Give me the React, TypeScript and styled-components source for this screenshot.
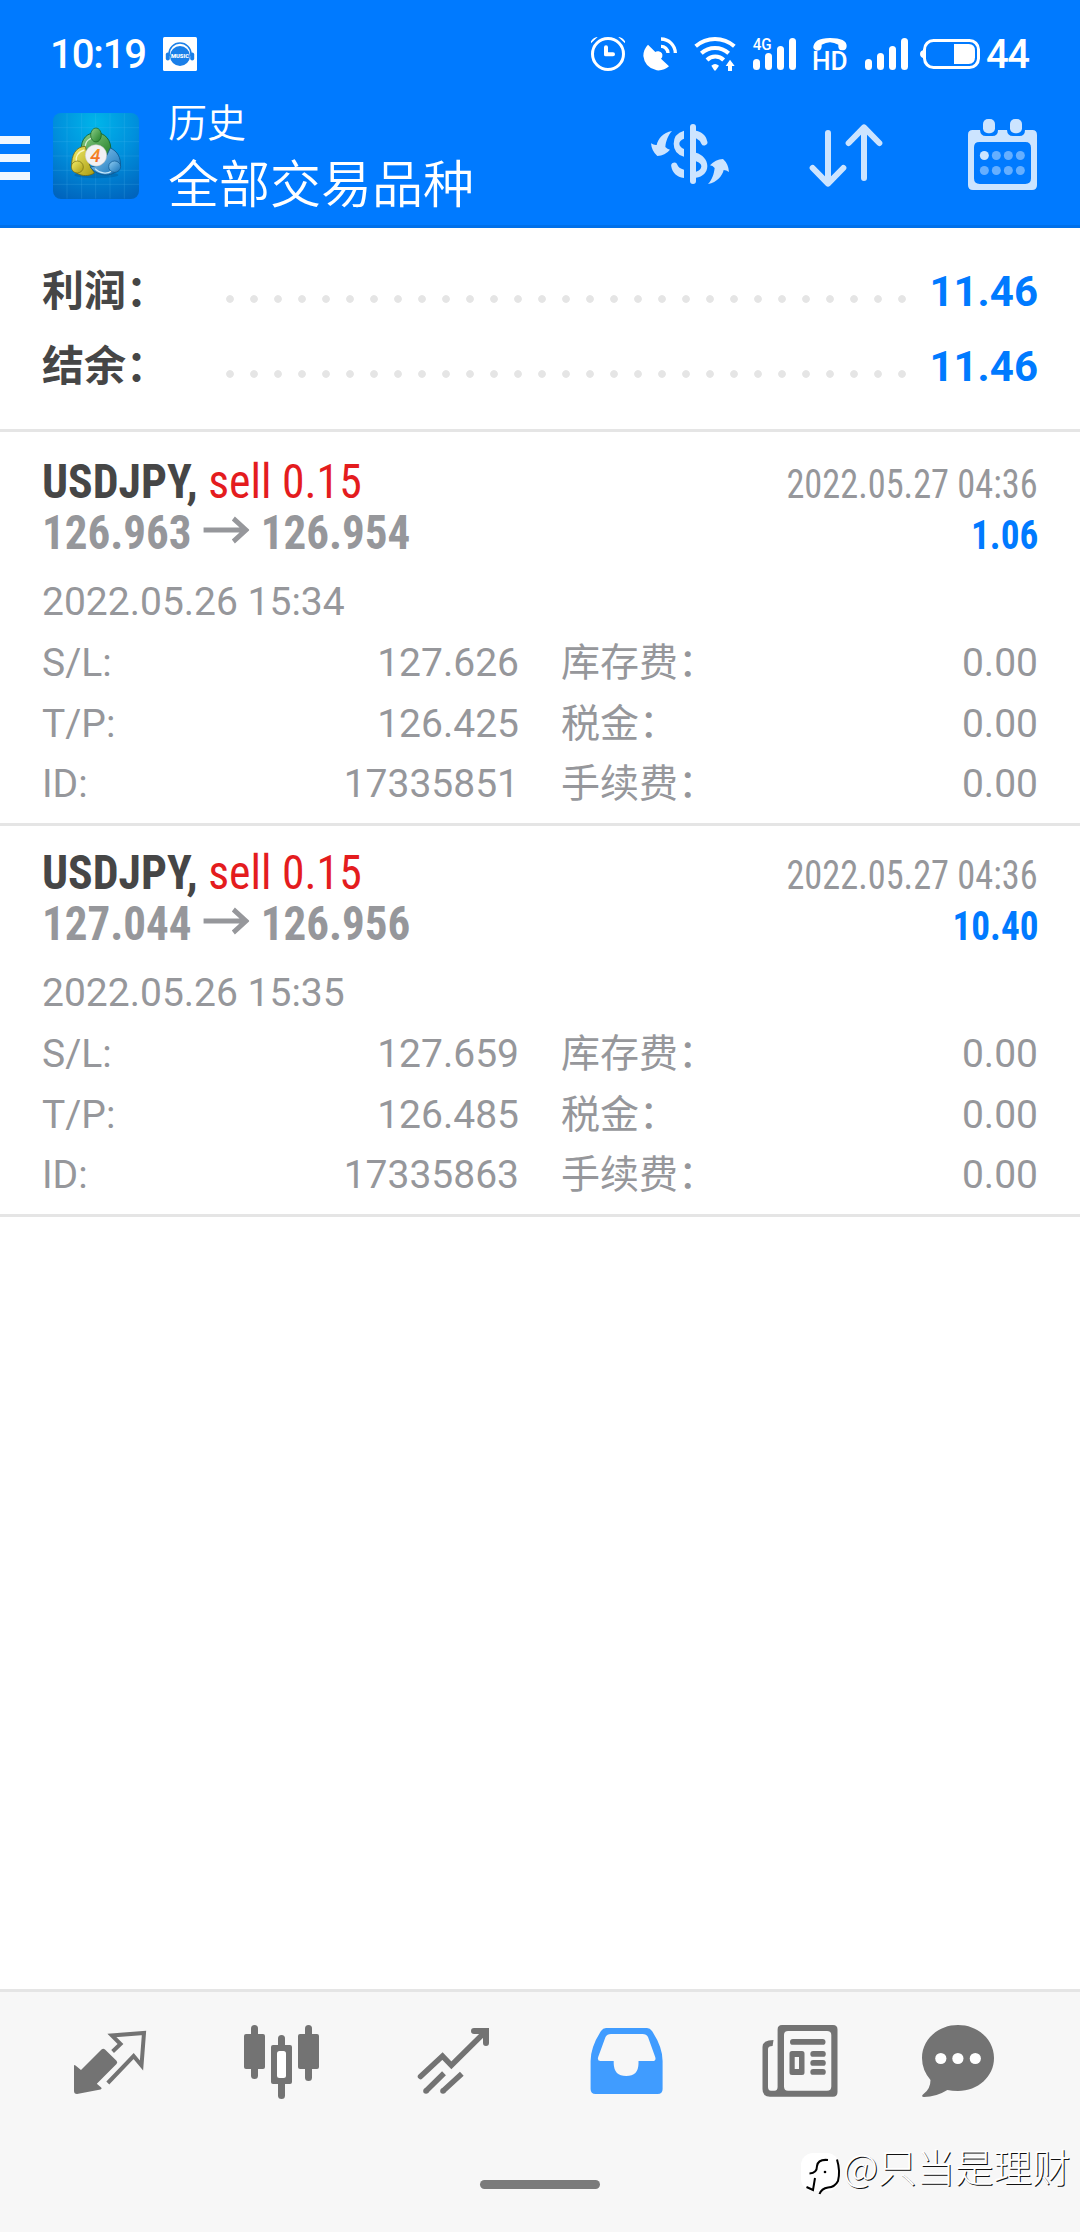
import React from "react";
import styled, { createGlobalStyle } from "styled-components";

const GlobalStyle = createGlobalStyle`
  * { box-sizing: border-box; }
  body {
    margin: 0;
    background: #fff;
    font-family: Roboto, "Noto Sans CJK SC", sans-serif;
    -webkit-font-smoothing: antialiased;
  }
  svg { display: block; flex: none; }
`;

const Screen = styled.div`
  position: relative;
  width: 1080px;
  height: 2232px;
  display: flex;
  flex-direction: column;
  background: #fff;
  overflow: hidden;
`;

/* ---------- Header ---------- */

const Header = styled.header`
  height: 228px;
  background: #007aff;
  border-bottom: 3px solid #0070e9;
  color: #fff;
`;

const StatusBar = styled.div`
  height: 104px;
  padding: 4px 50px 0 50px;
  display: flex;
  align-items: center;
  justify-content: space-between;
`;

const StatusGroup = styled.div`
  display: flex;
  align-items: center;
`;

const Clock = styled.span`
  width: 113px;
  padding-top: 2px;
  font-size: 40px;
  line-height: 40px;
  font-weight: 500;
  letter-spacing: -1.1px;
`;

const BatteryLevel = styled.span`
  width: 44px;
  margin-left: 6px;
  padding-top: 2px;
  font-size: 40px;
  line-height: 40px;
  font-weight: 500;
  letter-spacing: -1.6px;
`;

const AppBar = styled.div`
  height: 121px;
  display: flex;
  align-items: flex-start;
`;

const MenuButton = styled.div`
  width: 30px;
  margin-top: 32px;
  display: flex;
  flex-direction: column;
  gap: 10px;
`;

const MenuLine = styled.span`
  height: 8px;
  background: #f0f7ff;
`;

const LogoSlot = styled.div`
  margin: 9px 0 0 23px;
`;

const Titles = styled.div`
  flex: 1;
  margin-left: 29px;
  display: flex;
  flex-direction: column;
  gap: 15px;
  font-weight: 350;
`;

const Title = styled.span`
  font-size: 39px;
  line-height: 40px;
`;

const Subtitle = styled.span`
  font-size: 51px;
  line-height: 54px;
`;

const Actions = styled.div`
  display: flex;
  gap: 79px;
  padding: 14px 43px 0 0;
`;

/* ---------- Summary ---------- */

const Summary = styled.section`
  height: 204px;
  padding: 26px 42px 0;
  border-bottom: 3px solid #e5e5e5;
`;

const SummaryRow = styled.div`
  height: 75px;
  display: flex;
  align-items: center;
  font-size: 42px;
  line-height: 75px;
  font-weight: 700;
`;

const SummaryLabel = styled.span`
  width: 176px;
  color: #464646;
`;

const Leader = styled.span`
  width: 696px;
  height: 10px;
  margin-top: 15px;
  background: radial-gradient(circle, #e5e5e5 3.4px, transparent 4.3px) 0 0 / 24px 10px repeat-x;
`;

const SummaryValue = styled.span`
  flex: 1;
  text-align: right;
  color: #007aff;
`;

/* ---------- Trades ---------- */

const TradeList = styled.main`
  flex: 1;
  padding-top: 3px;
`;

const Trade = styled.article`
  height: 391px;
  padding: 21px 42px 0;
  border-bottom: 3px solid #e5e5e5;
  color: #96979b;
`;

const TradeLine = styled.div`
  height: 51px;
  display: flex;
  align-items: baseline;
  justify-content: space-between;
  font-family: "Roboto Condensed", Roboto, sans-serif;
  font-size: 48px;
  line-height: 51px;
  white-space: nowrap;
`;

const Deal = styled.span`
  transform: scaleX(0.952);
  transform-origin: left;
`;

const Symbol = styled.span`
  color: #464646;
  font-weight: 700;
`;

const Side = styled.span`
  color: #e41c1e;
`;

const Prices = styled.span`
  display: flex;
  gap: 12.3px;
  font-weight: 700;
  transform: scaleX(0.938);
  transform-origin: left;
`;

const ArrowSlot = styled.span`
  height: 51px;
  padding-top: 7px;
`;

const Small = styled.span<{ $profit?: boolean }>`
  font-size: 40px;
  font-weight: ${(p) => (p.$profit ? 700 : 400)};
  color: ${(p) => (p.$profit ? "#007aff" : "inherit")};
  transform: scaleX(${(p) => (p.$profit ? 0.93 : 0.908)});
  transform-origin: right;
`;

const Details = styled.div`
  margin-top: 14px;
  font-size: 39px;
  line-height: 61px;
`;

const DetailGrid = styled.div`
  display: grid;
  grid-template-columns: 477px 477px;
  grid-template-rows: 61px 60px 60px;
  column-gap: 42px;
`;

const Detail = styled.div`
  display: flex;
  justify-content: space-between;
`;

/* ---------- Bottom navigation ---------- */

const BottomBar = styled.nav`
  height: 243px;
  background: #f7f7f7;
  border-top: 3px solid #e5e5e5;
  display: flex;
  flex-direction: column;
  align-items: center;
`;

const Tabs = styled.div`
  align-self: stretch;
  display: flex;
  gap: 82px;
  padding: 28px 0 0 60px;
`;

const Tab = styled.div<{ $active?: boolean }>`
  color: ${(p) => (p.$active ? "#409cff" : "#737373")};
`;

const HomeBar = styled.div`
  width: 120px;
  height: 9px;
  margin-top: 70px;
  border-radius: 5px;
  background: #7b7b7b;
`;

const Watermark = styled.div`
  position: absolute;
  left: 801px;
  top: 2149px;
  display: flex;
  align-items: flex-start;
  height: 50px;
  font-size: 38.5px;
  line-height: 32px;
  font-weight: 300;
  font-family: "Noto Sans CJK SC", sans-serif;
  color: #fff;
  white-space: nowrap;
  text-shadow: 1px 1px 0.5px #111;
`;

/* ---------- Status icons ---------- */

const MusicIcon = () => (
  <svg width="34" height="34" viewBox="0 0 34 34">
    <rect width="34" height="34" rx="1.5" fill="#fff" />
    <circle cx="17" cy="19" r="10" fill="#1a7fe8" />
    <path d="M6 19V17a11 11 0 0 1 22 0v2" fill="none" stroke="#1a7fe8" strokeWidth="1.5" />
    <rect x="2.8" y="15.5" width="4" height="8" rx="2" fill="#1a7fe8" />
    <rect x="27.2" y="15.5" width="4" height="8" rx="2" fill="#1a7fe8" />
    <text x="17" y="21.2" textAnchor="middle" fontSize="5.8" fontWeight="900" fill="#fff" textLength="18">MUSIC</text>
  </svg>
);

const StatusIcons = () => (
  <svg width="389" height="48" viewBox="93 90 1167 144" fill="#fff">
    {/* alarm */}
    <circle cx="144" cy="162" r="46.5" fill="none" stroke="#fff" strokeWidth="9" />
    <path d="M132 142q0-6 6-6t6 6v15h15q6 0 6 6t-6 6h-22q-5 0-5-5z" />
    <path d="M93 130v-6q8-12 18-13h2zM195 130v-6q-8-12-18-13h-2z" />
    {/* satellite dish */}
    <path d="M264 134L286 156Q289 153 296 154Q309 157 307 169Q307 173 303 176L327 199Q312 213 290 211Q254 203 250 168Q250 148 264 134Z" />
    <path d="M303 117A43 43 0 0 1 346 159M303 139A21 21 0 0 1 324 159" fill="none" stroke="#fff" strokeWidth="10" />
    {/* wifi */}
    <g fill="none" stroke="#fff" strokeWidth="12">
      <path d="M407 139A88 88 0 0 1 523 139" />
      <path d="M424 160A61 61 0 0 1 506 160" />
      <path d="M441 180A35 35 0 0 1 491 180" />
    </g>
    <path d="M454 197Q465 187 477 197L468 210Q465 214 462 210Z" />
    <path d="M510 179L524 198H516V213H504V198H497Z" />
    {/* 4G signal */}
    <text x="578" y="150" fontSize="49" fontWeight="500" textLength="57" lengthAdjust="spacingAndGlyphs">4G</text>
    <rect x="579" y="177" width="21" height="33" rx="10.5" />
    <rect x="615" y="159" width="21" height="51" rx="10.5" />
    <rect x="651" y="138" width="21" height="72" rx="10.5" />
    <rect x="687" y="114" width="21" height="96" rx="10.5" />
    {/* HD voice */}
    <path d="M760 144Q760 114 810 114Q860 114 860 138Q859 151 849 151L841 150Q834 147 835 134Q810 119 785 134Q786 147 779 151Q765 155 760 144Z" />
    <text x="756" y="210" fontSize="76" fontWeight="500" textLength="107" lengthAdjust="spacingAndGlyphs">HD</text>
    {/* second signal */}
    <rect x="915" y="177" width="21" height="33" rx="10.5" />
    <rect x="951" y="159" width="21" height="51" rx="10.5" />
    <rect x="987" y="138" width="21" height="72" rx="10.5" />
    <rect x="1023" y="114" width="21" height="96" rx="10.5" />
    {/* battery */}
    <rect x="1093.5" y="121.5" width="162" height="81" rx="27" fill="none" stroke="#fff" strokeWidth="9" />
    <path d="M1092 149Q1080 152 1080 162T1092 175Z" />
    <path d="M1182 132H1226Q1245 132 1245 152V172Q1245 192 1226 192H1182Z" />
  </svg>
);

/* ---------- App bar icons ---------- */

const AppLogo = () => (
  <svg width="86" height="86" viewBox="40 261 258 258">
    <defs>
      <radialGradient id="bg" cx="0.5" cy="0.12" r="0.95">
        <stop offset="0" stopColor="#00b5ea" />
        <stop offset="0.5" stopColor="#008fdc" />
        <stop offset="1" stopColor="#0064bd" />
      </radialGradient>
      <linearGradient id="green" x1="0" y1="0" x2="1" y2="1">
        <stop offset="0" stopColor="#8ed08a" />
        <stop offset="1" stopColor="#1e7d25" />
      </linearGradient>
      <linearGradient id="yellow" x1="0" y1="0" x2="1" y2="1">
        <stop offset="0" stopColor="#f3ee6a" />
        <stop offset="1" stopColor="#a99b12" />
      </linearGradient>
      <linearGradient id="blue" x1="0" y1="0" x2="1" y2="1">
        <stop offset="0" stopColor="#8fcdf2" />
        <stop offset="1" stopColor="#1471b8" />
      </linearGradient>
      <linearGradient id="four" x1="0" y1="0" x2="0" y2="1">
        <stop offset="0" stopColor="#f9a11e" />
        <stop offset="1" stopColor="#ee5a2c" />
      </linearGradient>
    </defs>
    <rect x="40" y="261" width="258" height="258" rx="24" fill="url(#bg)" />
    <path
      d="M82 262V518M126 262V518M168 262V518M211 262V518M254 262V518M40 305H298M40 347H298M40 390H298M40 433H298M40 475H298"
      stroke="#5cc4f5"
      strokeOpacity="0.22"
      strokeWidth="2.5"
    />
    <ellipse cx="170" cy="447" rx="66" ry="10" fill="#003a70" opacity="0.25" />
    <path d="M125 376C122 336 145 320 169 320S218 340 213 380L196 396L142 374Z" fill="url(#green)" stroke="#145f1e" strokeWidth="2.5" />
    <path d="M137 368C135 345 150 334 169 334" fill="none" stroke="#d5f0d0" strokeWidth="4" />
    <path d="M137 361C108 362 95 388 96 420C100 445 138 458 164 441L150 418Z" fill="url(#yellow)" stroke="#6f6a12" strokeWidth="2.5" />
    <path d="M134 372C114 378 106 394 110 408" fill="none" stroke="#fbf8bd" strokeWidth="4" />
    <path d="M212 366C234 376 244 395 242 420C225 455 178 455 152 424L190 412Z" fill="url(#blue)" stroke="#0c548c" strokeWidth="2.5" />
    <path d="M166 428C180 443 202 445 216 435" fill="none" stroke="#c6e8fb" strokeWidth="4" />
    <ellipse cx="169" cy="327" rx="16" ry="21" fill="url(#green)" stroke="#145f1e" strokeWidth="2" />
    <ellipse cx="113" cy="423" rx="18" ry="18" fill="url(#yellow)" stroke="#6f6a12" strokeWidth="2" />
    <ellipse cx="225" cy="422" rx="18" ry="17" fill="url(#blue)" stroke="#0c548c" strokeWidth="2" />
    <circle cx="169" cy="388" r="32" fill="#f1f1f3" stroke="#c5c8cc" strokeWidth="1.5" />
    <text x="167" y="407" textAnchor="middle" fontSize="56" fontStyle="italic" fontWeight="500" fill="url(#four)">4</text>
  </svg>
);

const DealIcon = () => (
  <svg width="78" height="72" viewBox="273 354 234 216" fill="#cce4ff">
    <path d="M336 393C325 404 317 424 316 441Q322 448 330 449Q315 467 292 468Q275 454 273 430Q282 436 290 435C294 417 309 397 336 393Z" />
    <path d="M444 552C456 540 462 522 464 504Q458 497 450 496Q466 478 489 477Q505 491 507 516Q499 510 491 510C487 527 472 547 444 552Z" />
    <path d="M372 392V416Q358 422 358 431T372 447V470Q341 461 341 431T372 392Z" />
    <path d="M372 534C350 531 337 517 334 500A9.5 9.5 0 0 1 352 494Q355 504 372 509Z" />
    <rect x="390" y="372" width="18" height="180" rx="9" />
    <path d="M408 392C425 395 438 406 441 422A9.5 9.5 0 0 1 424 431Q420 421 408 415Z" />
    <path fillRule="evenodd" d="M408 458C427 463 442 479 442 498S428 531 408 533ZM408 484V515Q424 511 424 499Q424 490 408 484Z" />
  </svg>
);

const SortIcon = () => (
  <svg width="81" height="72" viewBox="744 354 243 216" fill="none" stroke="#cce4ff" strokeWidth="18" strokeLinecap="round" strokeLinejoin="round">
    <path d="M804 399V548M758 504L804 551L850 504" />
    <path d="M912 534V384M866 429L912 382L958 429" />
  </svg>
);

const CalendarIcon = () => (
  <svg width="69" height="72" viewBox="1224 354 207 216" fill="#cce4ff">
    <path
      fillRule="evenodd"
      d="M1238 390H1260Q1261 408 1278 408H1297Q1314 408 1314 390H1341Q1342 408 1359 408H1378Q1395 408 1395 390H1417Q1431 390 1431 405V555Q1431 570 1416 570H1239Q1224 570 1224 555V404Q1224 390 1238 390ZM1258 426Q1242 426 1242 442V535Q1242 552 1259 552H1396Q1413 552 1413 535V443Q1413 426 1396 426Z"
    />
    <rect x="1269" y="357" width="36" height="43" rx="15" />
    <rect x="1350" y="357" width="36" height="43" rx="15" />
    <circle cx="1273" cy="466.5" r="13.5" />
    <g fill="#66afff">
      {[1309, 1345, 1381].map((x) => (
        <circle key={x} cx={x} cy="466.5" r="13.5" />
      ))}
      {[1273, 1309, 1345, 1381].map((x) => (
        <circle key={x} cx={x} cy="511.5" r="13.5" />
      ))}
    </g>
  </svg>
);

/* ---------- Trade arrow ---------- */

const PriceArrow = () => (
  <svg width="49" height="34" viewBox="0 0 49 34" fill="none" stroke="#96979b" strokeWidth="5">
    <path d="M0 16H45M32 4.5L45.5 16L32 27.5" />
  </svg>
);

/* ---------- Tab icons ---------- */

const TabSvg = ({ children }: { children: React.ReactNode }) => (
  <svg width="90" height="90" viewBox="0 0 90 90" fill="currentColor">
    {children}
  </svg>
);

const QuotesIcon = () => (
  <TabSvg>
    <path d="M14 46Q14 44.5 15.5 45.5L21 50L41.5 29.5Q43.3 28 45 29.5L56.5 40.8Q58 42.5 56.5 44L36.8 63.7L41.2 67.5Q42.4 69 40.5 69.6L17 74Q14 74 14 71Z" />
    <path d="M52.6 31.5L60.5 24L51.9 15.5L84 13L81.5 45.5L73.6 36L47.8 63" fill="none" stroke="currentColor" strokeWidth="4" />
  </TabSvg>
);

const ChartIcon = () => (
  <TabSvg>
    <rect x="12" y="14" width="21" height="35" rx="2" />
    <rect x="19" y="5" width="7" height="54" rx="3.5" />
    <rect x="66" y="14" width="21" height="35" rx="2" />
    <rect x="73" y="5" width="7" height="56" rx="3.5" />
    <rect x="46" y="15" width="7" height="64" rx="3.5" />
    <rect x="39" y="25" width="21" height="39" rx="2" />
    <rect x="45" y="31" width="9" height="27" rx="2.5" fill="#fff" />
  </TabSvg>
);

const TradeIcon = () => (
  <TabSvg>
    <g fill="none" stroke="currentColor" strokeWidth="5.5">
      <path d="M16.5 56.5L38.5 36L47.4 45.3L81.5 11.5" strokeLinecap="round" />
      <path d="M70 11H82V23" strokeWidth="6" strokeLinecap="round" />
      <path d="M22 71L40 53.3M39 71L57.8 53.8" />
    </g>
    <circle cx="22" cy="71" r="2.8" />
    <circle cx="39" cy="71" r="2.8" />
  </TabSvg>
);

const HistoryIcon = () => (
  <TabSvg>
    <path
      fillRule="evenodd"
      d="M30 8H71Q74 8 76 11Q86.6 27 86.6 41V69Q86.6 74 81.6 74H19.6Q14.6 74 14.6 69V41Q14.6 27 25 11Q27 8 30 8ZM35 14Q31 14 29.5 17L22.2 37Q21 41 24.5 41H37.7V43.5Q38 56 50.2 56T62.5 43.5V41H76.5Q80.5 41 79.2 37L72 17Q70.5 14 66.5 14Z"
    />
  </TabSvg>
);

const NewsIcon = () => (
  <TabSvg>
    <path
      fillRule="evenodd"
      d="M34 5H85Q89.5 5 89.5 9.5V72Q89.5 76.7 85 76.7H22Q14.5 76.7 14.5 69V27Q14.5 20 25.5 20L24.6 26Q20 26 20 29V67Q20 70.7 23 70.7H26.5Q29.6 70.7 29.6 67V9.5Q29.6 5 34 5ZM40 11Q36 11 36 15V66.5Q36 70.7 40 70.7H79Q83.3 70.7 83.3 66.5V15Q83.3 11 79 11Z"
    />
    <rect x="42" y="19" width="35.5" height="5.8" rx="2.9" />
    <path fillRule="evenodd" d="M44 31H54Q56.5 31 56.5 33.5V52.5Q56.5 55 54 55H44Q41.5 55 41.5 52.5V33.5Q41.5 31 44 31ZM46.7 37V49H51V37Z" />
    <rect x="62.3" y="31" width="15.5" height="5.8" rx="2.9" />
    <rect x="62.3" y="40" width="15.5" height="5.8" rx="2.9" />
    <rect x="62.3" y="49" width="15.5" height="5.8" rx="2.9" />
  </TabSvg>
);

const ChatIcon = () => (
  <TabSvg>
    <path d="M38 5C58 5 74 19.5 74 38S58 71 38 71Q32 71 27.4 70Q16 77 4 77Q0.5 76.5 3.5 74Q10.5 69 10.5 60Q2 50 2 38C2 19.5 18 5 38 5Z" />
    <g fill="#fff">
      <circle cx="20.8" cy="38.5" r="5.6" />
      <circle cx="37.9" cy="38.5" r="5.6" />
      <circle cx="55.3" cy="38.5" r="5.6" />
    </g>
  </TabSvg>
);

const WatermarkLogo = () => (
  <svg width="42" height="46" viewBox="0 0 42 46">
    <rect x="0" y="4" width="38" height="38" rx="12" fill="#fff" />
    <path d="M36 10.5Q39.5 22 37 32Q34 38 27 38.5Q20.5 39.5 18.5 45" fill="none" stroke="#000" strokeWidth="2" />
    <path d="M27 11Q17 10 16 17Q16 24 8.500 24.5M14 29L12 41L5.5 38" fill="none" stroke="#000" strokeWidth="2" />
    <circle cx="24" cy="23" r="1.3" fill="#000" />
  </svg>
);

/* ---------- Data ---------- */

const totals = [
  { label: "利润：", value: "11.46" },
  { label: "结余：", value: "11.46" },
];

const trades = [
  {
    open: "126.963", close: "126.954", closed: "2022.05.27 04:36", profit: "1.06", opened: "2022.05.26 15:34",
    details: [["S/L:", "127.626"], ["库存费：", "0.00"], ["T/P:", "126.425"], ["税金：", "0.00"], ["ID:", "17335851"], ["手续费：", "0.00"]],
  },
  {
    open: "127.044", close: "126.956", closed: "2022.05.27 04:36", profit: "10.40", opened: "2022.05.26 15:35",
    details: [["S/L:", "127.659"], ["库存费：", "0.00"], ["T/P:", "126.485"], ["税金：", "0.00"], ["ID:", "17335863"], ["手续费：", "0.00"]],
  },
];

export default function App() {
  return (
    <Screen>
      <GlobalStyle />
      <Header>
        <StatusBar>
          <StatusGroup>
            <Clock>10:19</Clock>
            <MusicIcon />
          </StatusGroup>
          <StatusGroup>
            <StatusIcons />
            <BatteryLevel>44</BatteryLevel>
          </StatusGroup>
        </StatusBar>
        <AppBar>
          <MenuButton>
            <MenuLine />
            <MenuLine />
            <MenuLine />
          </MenuButton>
          <LogoSlot>
            <AppLogo />
          </LogoSlot>
          <Titles>
            <Title>历史</Title>
            <Subtitle>全部交易品种</Subtitle>
          </Titles>
          <Actions>
            <DealIcon />
            <SortIcon />
            <CalendarIcon />
          </Actions>
        </AppBar>
      </Header>

      <Summary>
        {totals.map((t) => (
          <SummaryRow key={t.label}>
            <SummaryLabel>{t.label}</SummaryLabel>
            <Leader />
            <SummaryValue>{t.value}</SummaryValue>
          </SummaryRow>
        ))}
      </Summary>

      <TradeList>
        {trades.map((t) => (
          <Trade key={t.open}>
            <TradeLine>
              <Deal>
                <Symbol>USDJPY,</Symbol> <Side>sell 0.15</Side>
              </Deal>
              <Small>{t.closed}</Small>
            </TradeLine>
            <TradeLine>
              <Prices>
                <span>{t.open}</span>
                <ArrowSlot>
                  <PriceArrow />
                </ArrowSlot>
                <span>{t.close}</span>
              </Prices>
              <Small $profit>{t.profit}</Small>
            </TradeLine>
            <Details>
              <div>{t.opened}</div>
              <DetailGrid>
                {t.details.map(([label, value]) => (
                  <Detail key={label}>
                    <span>{label}</span>
                    <span>{value}</span>
                  </Detail>
                ))}
              </DetailGrid>
            </Details>
          </Trade>
        ))}
      </TradeList>

      <BottomBar>
        <Tabs>
          <Tab><QuotesIcon /></Tab>
          <Tab><ChartIcon /></Tab>
          <Tab><TradeIcon /></Tab>
          <Tab $active><HistoryIcon /></Tab>
          <Tab><NewsIcon /></Tab>
          <Tab><ChatIcon /></Tab>
        </Tabs>
        <HomeBar />
      </BottomBar>

      <Watermark>
        <WatermarkLogo />
        <span>@只当是理财</span>
      </Watermark>
    </Screen>
  );
}
